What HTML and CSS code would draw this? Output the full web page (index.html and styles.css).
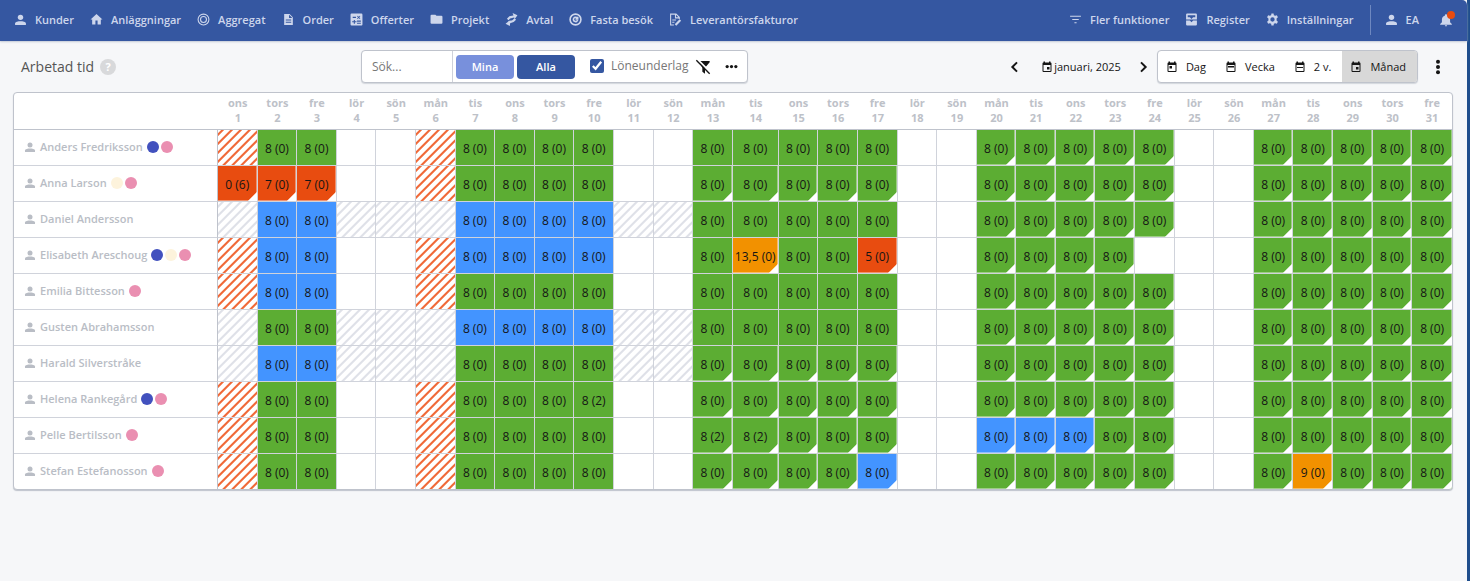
FILE: index.html
```html
<!DOCTYPE html>
<html lang="sv">

<head>
    <meta charset="UTF-8">
    <meta name="viewport" content="width=device-width, initial-scale=1.0">
    <title>Arbetad tid</title>
    <link rel="stylesheet" href="styles.css">
</head>

<body>

    <!-- icons used more than once -->
    <svg width="0" height="0" class="sprite" aria-hidden="true">
        <symbol id="person" viewBox="0 0 24 24">
            <circle cx="12" cy="8" r="5" />
            <path d="M2 22v-3c0-3 6-4 10-4s10 1 10 4v3z" />
        </symbol>
        <symbol id="calendar" viewBox="0 0 24 24">
            <path fill-rule="evenodd" d="M5 1h3v2h8V1h3v2a2 2 0 0 1 2 2v15a2 2 0 0 1-2 2H5a2 2 0 0 1-2-2V5a2 2 0 0 1 2-2zM5 8v12h14V8z" />
        </symbol>
    </svg>

    <div class="page">
        <nav class="navbar">
            <div class="nav-left">
                <a href="#"><svg viewBox="0 0 24 24"><use href="#person" /></svg>Kunder</a>
                <a href="#"><svg viewBox="0 0 24 24"><path d="M10 21v-7h4v7h6v-9h3L12 2 1 12h3v9z" /></svg>Anläggningar</a>
                <a href="#"><svg class="line" viewBox="0 0 24 24" stroke-width="2"><circle cx="12" cy="12" r="10" /><circle cx="12" cy="12" r="5.500" /></svg>Aggregat</a>
                <a href="#"><svg viewBox="0 0 24 24"><path fill-rule="evenodd" d="M4 2h10l6 6v14H4zM13 3v6h6zM7 12v2h10v-2zM7 16v2h10v-2z" /></svg>Order</a>
                <a href="#"><svg viewBox="0 0 24 24"><path fill-rule="evenodd" d="M3 1h18a2 2 0 0 1 2 2v18a2 2 0 0 1-2 2H3a2 2 0 0 1-2-2V3a2 2 0 0 1 2-2zM5 7v2h6V7zM13 14v2h7v-2zM13 18v2h7v-2zM7 13v2H4v2h3v3h2v-3h3v-2H9v-2zM13 6l2 2-2 2 1 1 2-2 2 2 1-1-2-2 2-2-1-1-2 2-2-2z" /></svg>Offerter</a>
                <a href="#"><svg viewBox="0 0 24 24"><path d="M10 3H3a2 2 0 0 0-2 2v13a2 2 0 0 0 2 2h18a2 2 0 0 0 2-2V7a2 2 0 0 0-2-2h-9z" /></svg>Projekt</a>
                <a href="#"><svg class="line" viewBox="0 0 24 24" stroke-width="4"><path d="M5 12l4-4 9-2M19 11l-4 4-9 3" /><path d="M14 0l9 4-5 7zM10 13l-9 7 8 4z" fill="currentColor" stroke="none" /></svg>Avtal</a>
                <a href="#"><svg class="line" viewBox="0 0 24 24" stroke-width="3"><circle cx="12" cy="12" r="10" /><path d="M15 9a4 4 0 1 0 1 4M16 7v4h-4" /></svg>Fasta besök</a>
                <a href="#"><svg class="line" viewBox="0 0 24 24" stroke-width="2"><path d="M9 22H3V2h10l6 6v3M12 2v7h7M6 13h7M6 17h4" /><path d="M12 22l9-9" stroke-width="4" /></svg>Leverantörsfakturor</a>
            </div>
            <div class="nav-right">
                <a href="#"><svg viewBox="0 0 24 24"><path d="M2 5h20v2H2zM6 11h12v2H6zM10 17h4v2h-4z" /></svg>Fler funktioner</a>
                <a href="#"><svg viewBox="0 0 24 24"><path fill-rule="evenodd" d="M4 1h16a2 2 0 0 1 2 2v9H2V3a2 2 0 0 1 2-2zM5 4v4h4l3 3 3-3h4V4zM2 14h7l3 3 3-3h7v7a2 2 0 0 1-2 2H4a2 2 0 0 1-2-2z" /></svg>Register</a>
                <a href="#"><svg viewBox="0 0 24 24"><path fill-rule="evenodd" d="M10 1h4l.5 3 2.500 1 3-1 2 4-2.500 2v4l2.500 2-2 4-3-1-2.500 1-.5 3h-4l-.5-3L7 19l-3 1-2-4 2.500-2v-4L2 8l2-4 3 1 2.500-1zM12 8a4 4 0 1 0 0 8 4 4 0 0 0 0-8z" /></svg>Inställningar</a>
                <a href="#" class="user"><svg viewBox="0 0 24 24"><use href="#person" /></svg>EA</a>
                <button class="bell" aria-label="Notiser">
                    <svg viewBox="0 0 24 24"><path d="M12 23a2 2 0 0 0 2-2h-4a2 2 0 0 0 2 2zM19 16v-5c0-3-2-6-5-6.500V4a2 2 0 0 0-4 0v.5C7 5 5 8 5 11v5l-3 3v1h20v-1z" /></svg>
                    <span class="badge"></span>
                </button>
            </div>
        </nav>

        <main>
            <div class="toolbar">
                <div class="title">
                    <h1>Arbetad tid</h1>
                    <button class="help" aria-label="Hjälp">?</button>
                </div>

                <div class="filter box">
                    <input type="text" class="search" placeholder="Sök..." aria-label="Sök">
                    <button class="btn btn-light">Mina</button>
                    <button class="btn">Alla</button>
                    <label class="check"><input type="checkbox" checked>Löneunderlag</label>
                    <button class="icon-btn" aria-label="Rensa filter">
                        <svg viewBox="0 0 24 24"><path d="M6 3h16v2l-7 8v9l-4-3v-6z" /><path d="M4 1l20 20" stroke="#fff" stroke-width="3" /><path d="M2 2l20 20" stroke="currentColor" stroke-width="2" /></svg>
                    </button>
                    <button class="icon-btn more" aria-label="Mer">
                        <svg viewBox="0 0 24 24"><circle cx="4" cy="12" r="3" /><circle cx="12" cy="12" r="3" /><circle cx="20" cy="12" r="3" /></svg>
                    </button>
                </div>

                <div class="period">
                    <button class="icon-btn" aria-label="Föregående"><svg class="line" viewBox="0 0 24 24" stroke-width="3"><path d="M15 5l-7 7 7 7" /></svg></button>
                    <button class="month"><svg viewBox="0 0 24 24"><use href="#calendar" /><path d="M12 12h5v5h-5z" /></svg>januari, 2025</button>
                    <button class="icon-btn" aria-label="Nästa"><svg class="line" viewBox="0 0 24 24" stroke-width="3"><path d="M9 5l7 7-7 7" /></svg></button>
                    <div class="views box">
                        <button><svg viewBox="0 0 24 24"><use href="#calendar" /><path d="M7 10h5v5H7z" /></svg>Dag</button>
                        <button><svg viewBox="0 0 24 24"><use href="#calendar" /><path d="M6 10h12v3H6z" /></svg>Vecka</button>
                        <button><svg viewBox="0 0 24 24"><use href="#calendar" /><path d="M6 12h12v2H6z" /></svg>2 v.</button>
                        <button class="active"><svg viewBox="0 0 24 24"><use href="#calendar" /><path d="M12 12h5v5h-5z" /></svg>Månad</button>
                    </div>
                    <button class="icon-btn" aria-label="Fler val"><svg viewBox="0 0 24 24"><circle cx="12" cy="4" r="3" /><circle cx="12" cy="12" r="3" /><circle cx="12" cy="20" r="3" /></svg></button>
                </div>
            </div>

            <div class="table-wrap">
                <table>
                    <colgroup id="cols"><col class="col-name"></colgroup>
                    <thead>
                        <tr id="days"><th aria-label="Namn"></th></tr>
                    </thead>
                    <tbody id="rows"></tbody>
                </table>
            </div>
        </main>
    </div>

    <script src="script.js"></script>
</body>

</html>
```
FILE: styles.css
```css
* {
    box-sizing: border-box;
    padding: 0;
    margin: 0;
}

body {
    font-family: "Open Sans", "Noto Sans", sans-serif;
    font-size: 11px;
    color: #151515;
    background-color: #1f4e8c;
}

button,
input {
    font: inherit;
    color: inherit;
    border: none;
    background: none;
}

a {
    color: inherit;
    text-decoration: none;
}

svg {
    fill: currentColor;
    flex: none;
}

svg.line {
    fill: none;
    stroke: currentColor;
}

.sprite {
    position: absolute;
}

.page {
    min-height: 100vh;
    margin-right: 3px;
    background-color: #f6f7f9;
}

/* navbar */

.navbar {
    display: flex;
    justify-content: space-between;
    height: 41px;
    padding: 0 14px 2px;
    color: #cdd6ec;
    background-color: #3557a1;
    border-top-right-radius: 5px;
    box-shadow: 0 1px 2px #c3c9d5;
    font-weight: 600;
}

.nav-left,
.nav-right {
    display: flex;
    align-items: center;
    gap: 16px;
    white-space: nowrap;
}

.navbar a {
    display: flex;
    align-items: center;
    gap: 8px;
}

.navbar svg {
    width: 13px;
    height: 13px;
}

.navbar .user {
    height: 30px;
    padding-left: 14px;
    border-left: 1px solid #6e88c0;
}

.bell {
    position: relative;
    display: flex;
    margin-left: 4px;
}

.navbar .bell svg {
    width: 14px;
    height: 14px;
}

.badge {
    position: absolute;
    top: -2px;
    right: -2px;
    width: 8px;
    height: 8px;
    border-radius: 50%;
    background-color: #e84c10;
}

/* toolbar */

.toolbar {
    display: grid;
    grid-template-columns: 340px auto 1fr;
    align-items: center;
    height: 51px;
    padding: 0 21px;
}

.title {
    display: flex;
    align-items: center;
    gap: 6px;
}

h1 {
    font-size: 14px;
    font-weight: 400;
    color: #555;
}

.help {
    width: 16px;
    height: 16px;
    border-radius: 50%;
    background-color: #d8d9db;
    color: #fff;
    font-size: 11px;
    font-weight: 700;
    line-height: 16px;
}

.box {
    display: flex;
    align-items: center;
    height: 33px;
    background-color: #fff;
    border: 1px solid #bfc3cc;
    border-radius: 4px;
    box-shadow: 0 1px 1px #d3d6dc;
}

.search {
    width: 91px;
    height: 31px;
    margin-right: 3px;
    padding-left: 10px;
    border-right: 1px solid #cfd2da;
    font-size: 12px;
}

.search::placeholder {
    color: #777;
}

.btn {
    width: 58px;
    height: 24px;
    margin-right: 3px;
    border-radius: 4px;
    background-color: #3557a1;
    color: #fff;
    font-weight: 600;
}

.btn-light {
    background-color: #7890dc;
}

.check {
    display: flex;
    align-items: center;
    gap: 7px;
    margin: 0 6px 2px 12px;
    font-size: 12px;
    color: #777;
}

.check input {
    width: 14px;
    height: 14px;
    accent-color: #3557a1;
}

.icon-btn {
    display: flex;
}

.icon-btn svg {
    width: 16px;
    height: 16px;
}

.more {
    margin: 0 9px 0 14px;
}

.more svg {
    width: 13px;
    height: 13px;
}

.period {
    display: flex;
    align-items: center;
    justify-content: flex-end;
}

.month,
.views button {
    display: flex;
    align-items: center;
    white-space: nowrap;
}

.month {
    gap: 1px;
    margin: 0 14px 0 18px;
}

.month svg,
.views svg {
    width: 12px;
    height: 12px;
}

.views {
    margin: 0 12px 0 6px;
}

.views button {
    gap: 8px;
    height: 31px;
    padding: 0 11px 0 8px;
}

.views .active {
    background-color: #d8d8d8;
    border-radius: 0 3px 3px 0;
}

/* timesheet */

.table-wrap {
    margin: 0 14px 0 13px;
    background-color: #fff;
    border: 1px solid #bfc3cc;
    border-radius: 4px;
    box-shadow: 0 1px 1px #bfc3cc;
    overflow: hidden;
}

table {
    width: 100%;
    table-layout: fixed;
    border-collapse: separate;
    border-spacing: 0;
}

.col-name {
    width: 204px;
}

.col-wide {
    width: 46px;
}

thead th {
    height: 37px;
    padding-bottom: 2px;
    border-bottom: 1px solid #bfc3cc;
    color: #bdc1c8;
    font-weight: 700;
    line-height: 15px;
}

.name {
    padding: 0 0 2px 10px;
    border-right: 1px solid #bfc3cc;
    color: #b9bdc5;
    font-weight: 600;
    text-align: left;
}

.name div {
    display: flex;
    align-items: center;
    gap: 2px;
}

.name svg {
    width: 12px;
    height: 12px;
}

.name a {
    margin: 0 2px;
}

.dot {
    width: 12px;
    height: 12px;
    border-radius: 50%;
}

.dot.cream {
    background-color: #fdf3dc;
}

.dot.pink {
    background-color: #ea8fb1;
}

tbody th,
td {
    height: 36px;
    border-bottom: 1px solid #d0d3db;
}

td {
    padding-top: 2px;
    border-right: 1px solid #d0d3db;
    font-size: 12px;
    text-align: center;
    white-space: nowrap;
}

tr > :last-child {
    border-right: none;
}

tbody tr:last-child > * {
    height: 35px;
    border-bottom: none;
}

.green {
    background-color: #5cad33;
}

.blue {
    background-color: #4394ff;
}

.dot.blue {
    background-color: #4251be;
}

.red {
    background-color: #e84c10;
}

.orange {
    background-color: #f29100;
}

.holiday,
.off {
    --stripe: #dfe1e8;
    background-image: linear-gradient(135deg, transparent 16%, var(--stripe) 18% 32%, transparent 36% 66%, var(--stripe) 68% 82%, transparent 86%);
    background-size: 9px 9px;
}

.holiday {
    --stripe: #f06a3a;
}

/* white fold in the lower right corner */
.fold {
    background-image: linear-gradient(315deg, #fff 6px, transparent 7px);
    box-shadow: inset -1px -1px rgba(255, 255, 255, 0.4);
}
```
FILE: script.js
```js
const weekdays = ['mån', 'tis', 'ons', 'tors', 'fre', 'lör', 'sön'];

// G green, B blue, R red, O orange (lower case = with a fold)
// "/" holiday, "-" not scheduled, "." empty
const classes = { g: 'green', b: 'blue', r: 'red', o: 'orange', '/': 'holiday', '-': 'off' };

const employees = [
    { name: 'Anders Fredriksson', dots: ['blue', 'pink'], days: '/GG../GGGG..GGGGG..ggggg..ggggg' },
    { name: 'Anna Larson', dots: ['cream', 'pink'], days: 'rrr../GGGG..ggggg..ggggg..ggggg', hours: { 1: '0 (6)', 2: '7 (0)', 3: '7 (0)' } },
    { name: 'Daniel Andersson', dots: [], days: '-BB---BBBB--GGGGG..ggggg..ggggg' },
    { name: 'Elisabeth Areschoug', dots: ['blue', 'cream', 'pink'], days: '/BB../BBBB..GoGGr..gggg...ggggg', hours: { 14: '13,5 (0)', 17: '5 (0)' } },
    { name: 'Emilia Bittesson', dots: ['pink'], days: '/BB../GGGG..GGGGG..ggggg..ggggg' },
    { name: 'Gusten Abrahamsson', dots: [], days: '-GG---BBBB--GGGGG..ggggg..ggggg' },
    { name: 'Harald Silverstråke', dots: [], days: '-BB---GGGG--ggggg..ggggg..ggggg' },
    { name: 'Helena Rankegård', dots: ['blue', 'pink'], days: '/GG../GGGG..ggggg..ggggg..ggggg', hours: { 10: '8 (2)' } },
    { name: 'Pelle Bertilsson', dots: ['pink'], days: '/GG../GGGG..ggggg..bbbgg..ggggg', hours: { 13: '8 (2)', 14: '8 (2)' } },
    { name: 'Stefan Estefanosson', dots: ['pink'], days: '/GG../GGGG..ggggb..ggggg..goggg', hours: { 28: '9 (0)' } }
];

let cols = '';
let head = '';
for (let day = 1; day <= 31; day++) {
    // 1 januari 2025 is a wednesday
    cols += day === 14 ? '<col class="col-wide">' : '<col>';
    head += `<th>${weekdays[(day + 1) % 7]}<br>${day}</th>`;
}
document.getElementById('cols').insertAdjacentHTML('beforeend', cols);
document.getElementById('days').insertAdjacentHTML('beforeend', head);

document.getElementById('rows').innerHTML = employees.map(person => {
    const dots = person.dots.map(color => `<span class="dot ${color}"></span>`).join('');
    const cells = [...person.days].map((code, i) => {
        const worked = /[a-z]/i.test(code);
        const fold = /[a-z]/.test(code) ? ' fold' : '';
        const hours = worked ? (person.hours && person.hours[i + 1]) || '8 (0)' : '';
        return `<td class="${(classes[code.toLowerCase()] || '') + fold}">${hours}</td>`;
    }).join('');
    return `<tr><th class="name" scope="row"><div><svg viewBox="0 0 24 24"><use href="#person" /></svg><a href="#">${person.name}</a>${dots}</div></th>${cells}</tr>`;
}).join('');
```
